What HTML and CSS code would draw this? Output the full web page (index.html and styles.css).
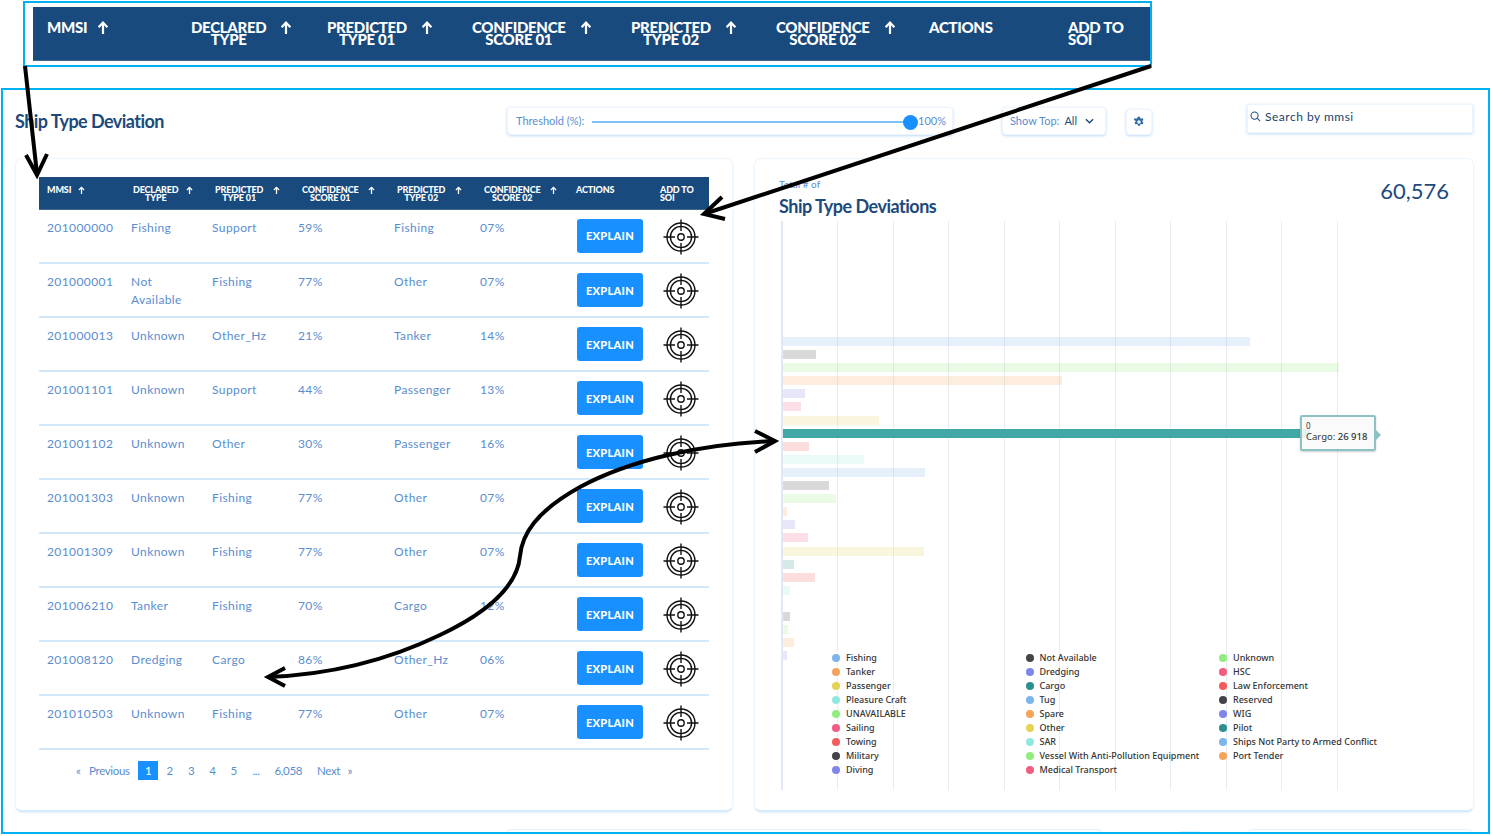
FILE: index.html
```html
<!DOCTYPE html>
<html lang="en">
<head>
    <meta charset="UTF-8">
    <meta name="viewport" content="width=device-width, initial-scale=1.0">
    <title>Ship Type Deviation</title>
    <link rel="stylesheet" href="styles.css">
</head>
<body>
    <svg width="0" height="0" class="defs">
        <symbol id="sort-up" viewBox="0 0 12 14">
            <path d="M6 13V2M1.6 6.2 6 1.6l4.4 4.6" fill="none" stroke="#fff" stroke-width="2.2"/>
        </symbol>
        <symbol id="target" viewBox="0 0 36 36">
            <g fill="none" stroke="#111" stroke-width="1.4">
                <circle cx="18" cy="18" r="14"/>
                <circle cx="18" cy="18" r="10.6"/>
                <circle cx="18" cy="18" r="3.2"/>
                <path d="M18 .5V12M18 24V35.5M.5 18H12M24 18H35.5"/>
            </g>
        </symbol>
    </svg>

    <div id="page">
        <section id="zoom-frame">
            <div class="zoom-head">
                <div class="zoom-cell"><span>MMSI</span><svg class="zoom-arrow"><use href="#sort-up"/></svg></div>
                <div class="zoom-cell"><span class="two-line">DECLARED<br>TYPE</span><svg class="zoom-arrow"><use href="#sort-up"/></svg></div>
                <div class="zoom-cell"><span class="two-line">PREDICTED<br>TYPE 01</span><svg class="zoom-arrow"><use href="#sort-up"/></svg></div>
                <div class="zoom-cell"><span class="two-line">CONFIDENCE<br>SCORE 01</span><svg class="zoom-arrow"><use href="#sort-up"/></svg></div>
                <div class="zoom-cell"><span class="two-line">PREDICTED<br>TYPE 02</span><svg class="zoom-arrow"><use href="#sort-up"/></svg></div>
                <div class="zoom-cell"><span class="two-line">CONFIDENCE<br>SCORE 02</span><svg class="zoom-arrow"><use href="#sort-up"/></svg></div>
                <div class="zoom-cell"><span>ACTIONS</span></div>
                <div class="zoom-cell"><span>ADD TO<br>SOI</span></div>
            </div>
        </section>

        <section id="main-frame">
            <div class="toolbar">
                <h1 class="page-title">Ship Type Deviation</h1>
                <div class="control threshold">
                    <span class="control-label">Threshold (%):</span>
                    <div class="slider-track"></div>
                    <div class="slider-thumb"></div>
                    <span class="control-label slider-value">100%</span>
                </div>
                <div class="control show-top">
                    <span class="control-label">Show Top:</span>
                    <span class="show-value">All</span>
                    <svg class="chevron" viewBox="0 0 10 6"><path d="M1 1l4 4 4-4" fill="none" stroke="#1c4a7c" stroke-width="1.6"/></svg>
                </div>
                <div class="control gear-box">
                    <svg class="gear" viewBox="0 0 16 16"><path fill="#2e6da4" fill-rule="evenodd" d="M6.6 1h2.8l.3 1.9 1.1.6 1.8-.7 1.4 2.4-1.5 1.2v1.2l1.5 1.2-1.4 2.4-1.8-.7-1.1.6-.3 1.9H6.6l-.3-1.9-1.1-.6-1.8.7-1.4-2.4 1.5-1.2V6.4L1 5.2l1.4-2.4 1.8.7 1.1-.6zM8 5.7a2.3 2.3 0 1 0 0 4.6 2.3 2.3 0 0 0 0-4.6z"/></svg>
                </div>
                <div class="search-box">
                    <svg class="search-icon" viewBox="0 0 12 12"><circle cx="5" cy="5" r="3.9" fill="none" stroke="#1c4a7c" stroke-width="1.1"/><path d="M8 8l3 3" stroke="#1c4a7c" stroke-width="1.1"/></svg>
                    <span>Search by mmsi</span>
                </div>
            </div>

            <div class="cards">
                <div class="card table-card">
                    <table class="dev-table">
                        <thead>
                            <tr>
                                <th class="col-mmsi"><div class="th-in">MMSI<svg class="th-arrow"><use href="#sort-up"/></svg></div></th>
                                <th class="col-declared"><div class="th-in"><span class="two-line">DECLARED<br>TYPE</span><svg class="th-arrow"><use href="#sort-up"/></svg></div></th>
                                <th class="col-pred"><div class="th-in"><span class="two-line">PREDICTED<br>TYPE 01</span><svg class="th-arrow"><use href="#sort-up"/></svg></div></th>
                                <th class="col-conf"><div class="th-in"><span class="two-line">CONFIDENCE<br>SCORE 01</span><svg class="th-arrow"><use href="#sort-up"/></svg></div></th>
                                <th class="col-pred"><div class="th-in"><span class="two-line">PREDICTED<br>TYPE 02</span><svg class="th-arrow"><use href="#sort-up"/></svg></div></th>
                                <th class="col-conf"><div class="th-in"><span class="two-line">CONFIDENCE<br>SCORE 02</span><svg class="th-arrow"><use href="#sort-up"/></svg></div></th>
                                <th class="col-actions">ACTIONS</th>
                                <th class="col-add">ADD TO<br>SOI</th>
                            </tr>
                        </thead>
                        <tbody id="dev-rows"></tbody>
                    </table>
                    <div class="pagination">
                        <a class="page-link page-prev">«</a>
                        <a class="page-link">Previous</a>
                        <a class="page-link page-current">1</a>
                        <a class="page-link">2</a>
                        <a class="page-link">3</a>
                        <a class="page-link">4</a>
                        <a class="page-link">5</a>
                        <a class="page-link page-dots">...</a>
                        <a class="page-link">6,058</a>
                        <a class="page-link page-next">Next</a>
                        <a class="page-link">»</a>
                    </div>
                </div>

                <div class="card chart-card">
                    <div class="chart-head">
                        <div>
                            <div class="chart-over">Total # of</div>
                            <h2 class="chart-title">Ship Type Deviations</h2>
                        </div>
                        <div class="chart-total">60,576</div>
                    </div>
                    <div class="plot">
                        <div class="bars" id="bars"></div>
                        <div class="legend" id="legend"></div>
                        <div class="chart-tooltip">
                            <div class="tip-small">0</div>
                            <div>Cargo: <b>26 918</b></div>
                        </div>
                    </div>
                </div>
            </div>

            <div class="next-cards">
                <div class="next-card next-a"></div>
                <div class="next-card next-b"></div>
                <div class="next-card next-c"></div>
            </div>
        </section>

        <svg id="arrows" viewBox="0 0 1491 836">
            <g fill="none" stroke="#000" stroke-width="4">
                <path d="M25 66 37 174"/>
                <path d="M26 155 37 175 47 154"/>
                <path d="M1151 66 704 214"/>
                <path d="M722 197 704 214 725 219"/>
                <path d="M775 441C700 444 630 460 580 487 535 512 522 535 520 556 517 590 480 616 440 635 380 664 320 675 268 677"/>
                <path d="M755 431 775 441 755 452M285 668 268 677 285 686"/>
            </g>
        </svg>
    </div>

    <script>
        const rows = [
            ['201000000', 'Fishing', 'Support', '59%', 'Fishing', '07%'],
            ['201000001', 'Not Available', 'Fishing', '77%', 'Other', '07%'],
            ['201000013', 'Unknown', 'Other_Hz', '21%', 'Tanker', '14%'],
            ['201001101', 'Unknown', 'Support', '44%', 'Passenger', '13%'],
            ['201001102', 'Unknown', 'Other', '30%', 'Passenger', '16%'],
            ['201001303', 'Unknown', 'Fishing', '77%', 'Other', '07%'],
            ['201001309', 'Unknown', 'Fishing', '77%', 'Other', '07%'],
            ['201006210', 'Tanker', 'Fishing', '70%', 'Cargo', '12%'],
            ['201008120', 'Dredging', 'Cargo', '86%', 'Other_Hz', '06%'],
            ['201010503', 'Unknown', 'Fishing', '77%', 'Other', '07%']
        ];

        const palette = ['#7cb5ec', '#434348', '#90ed7d', '#f7a35c', '#8085e9', '#f15c80', '#e4d354', '#2b908f', '#f45b5b', '#91e8e1'];

        // bar widths in px, same order as the legend series
        const barWidths = [467, 33, 556, 279, 22, 18, 96, 527, 26, 81, 142, 46, 53, 4, 12, 25, 141, 11, 32, 7, 0, 7, 5, 11, 4];

        const legendNames = [
            'Fishing', 'Not Available', 'Unknown',
            'Tanker', 'Dredging', 'HSC',
            'Passenger', 'Cargo', 'Law Enforcement',
            'Pleasure Craft', 'Tug', 'Reserved',
            'UNAVAILABLE', 'Spare', 'WIG',
            'Sailing', 'Other', 'Pilot',
            'Towing', 'SAR', 'Ships Not Party to Armed Conflict',
            'Military', 'Vessel With Anti-Pollution Equipment', 'Port Tender',
            'Diving', 'Medical Transport'
        ];

        const tbody = document.getElementById('dev-rows');
        rows.forEach(item => {
            const row = tbody.insertRow();
            item.forEach(text => {
                const cell = row.insertCell();
                cell.appendChild(document.createTextNode(text));
            });
            row.insertCell().innerHTML = '<button class="explain-button">EXPLAIN</button>';
            row.insertCell().innerHTML = '<svg class="target-icon"><use href="#target"/></svg>';
        });

        const bars = document.getElementById('bars');
        barWidths.forEach((width, i) => {
            const bar = document.createElement('div');
            bar.className = i === 7 ? 'bar bar-active' : 'bar';
            bar.style.width = width + 'px';
            bar.style.backgroundColor = i === 7 ? '#42a8a6' : palette[i % palette.length];
            bars.appendChild(bar);
        });

        const legend = document.getElementById('legend');
        legendNames.forEach((name, i) => {
            const item = document.createElement('div');
            item.className = 'legend-item';
            const dot = document.createElement('span');
            dot.className = 'legend-dot';
            dot.style.backgroundColor = palette[i % palette.length];
            item.appendChild(dot);
            item.appendChild(document.createTextNode(name));
            legend.appendChild(item);
        });
    </script>
</body>
</html>
```

FILE: styles.css
```css
* {
    box-sizing: border-box;
}

body {
    font-family: Lato, Arial, sans-serif;
    margin: 0;
    padding: 0;
    background-color: #fff;
    color: #5a8dcf;
}

.defs {
    display: block;
}

#page {
    position: relative;
    width: 1491px;
    height: 836px;
    overflow: hidden;
    padding-top: 1px;
}

#arrows {
    position: absolute;
    top: 0;
    left: 0;
    width: 1491px;
    height: 836px;
    pointer-events: none;
}

/* zoomed table header on top */
#zoom-frame {
    width: 1129px;
    height: 66px;
    margin-left: 23px;
    padding: 4px 0 4px 8px;
    border: 2px solid #00b0f0;
}

.zoom-head {
    display: grid;
    grid-template-columns: 144px 136px 145px 159px 145px 153px 139px 1fr;
    height: 54px;
    padding: 14px 0 0 14px;
    background-color: #184a7e;
    border-bottom: 1px solid #44688f;
    color: #fff;
    font-size: 15px;
    font-weight: 900;
    line-height: 12px;
    letter-spacing: -0.3px;
}

.zoom-cell {
    display: flex;
    align-items: flex-start;
    gap: 14px;
}

.zoom-cell:first-child {
    gap: 10px;
}

.zoom-arrow {
    width: 12px;
    height: 16px;
    margin-top: -1px;
}

.two-line {
    text-align: center;
}

/* main frame */
#main-frame {
    width: 1489px;
    height: 746px;
    margin: 21px 0 0 1px;
    padding: 14px 14px 0 12px;
    border: 2px solid #00b0f0;
    overflow: hidden;
}

.toolbar {
    display: flex;
    align-items: flex-start;
    height: 54px;
}

.page-title {
    width: 492px;
    margin: 6px 0 0 0;
    color: #1c4a7c;
    font-size: 18px;
    font-weight: 700;
    line-height: 22px;
    letter-spacing: -0.55px;
}

.control {
    display: flex;
    align-items: center;
    height: 28px;
    padding-bottom: 1px;
    background-color: #fff;
    border: 1px solid #edf5fd;
    border-radius: 4px;
    box-shadow: 0 1px 3px rgba(110, 170, 230, 0.45);
    font-size: 11px;
}

.control-label {
    color: #5a8dcf;
}

.threshold {
    width: 446px;
    margin-top: 3px;
    padding-left: 8px;
    padding-right: 6px;
}

.slider-track {
    flex: 1;
    height: 2px;
    margin: 3px 0 0 8px;
    background-color: #7cc3f7;
}

.slider-thumb {
    flex: none;
    width: 15px;
    height: 15px;
    margin: 3px 0 0 -1px;
    border-radius: 50%;
    background-color: #1890ff;
}

.show-top {
    width: 104px;
    margin: 3px 0 0 49px;
    padding-left: 7px;
    padding-right: 11px;
}

.show-value {
    margin-left: 5px;
    color: #1c4a7c;
}

.chevron {
    width: 9px;
    height: 6px;
    margin-left: auto;
}

.gear-box {
    justify-content: center;
    width: 26px;
    height: 26px;
    margin: 5px 0 0 20px;
}

.gear {
    width: 12px;
    height: 12px;
}

.search-box {
    display: flex;
    align-items: center;
    gap: 4px;
    width: 226px;
    height: 29px;
    margin-left: 95px;
    padding: 0 0 4px 2px;
    border: 1px solid #edf5fd;
    box-shadow: 0 1px 3px rgba(110, 170, 230, 0.45);
    color: #1c3f66;
    font-size: 12px;
    letter-spacing: 0.5px;
}

.search-icon {
    width: 11px;
    height: 11px;
}

/* cards */
.cards {
    display: flex;
    gap: 21px;
}

.card {
    width: 718px;
    height: 654px;
    background-color: #fff;
    border: 1px solid #eef6fd;
    border-bottom: 2px solid #d9ecfb;
    border-radius: 7px;
    box-shadow: 0 1px 2px rgba(120, 180, 240, 0.2);
}

.table-card {
    padding: 18px 23px 0 23px;
}

.dev-table {
    width: 670px;
    table-layout: fixed;
    border-collapse: collapse;
}

.dev-table th {
    height: 32px;
    padding: 9px 0 0 8px;
    background-color: #184a7e;
    border-bottom: 1px solid #44688f;
    color: #fff;
    font-size: 9px;
    font-weight: 900;
    line-height: 7.5px;
    letter-spacing: -0.15px;
    text-align: left;
    vertical-align: top;
}

.th-in {
    display: flex;
    gap: 7px;
}

.col-pred .th-in,
.col-conf .th-in {
    gap: 10px;
}

.th-arrow {
    width: 7px;
    height: 9px;
}

.col-mmsi {
    width: 84px;
}

.col-declared {
    width: 81px;
}

.col-pred {
    width: 86px;
}

.col-conf {
    width: 96px;
}

.dev-table .col-declared {
    padding-left: 10px;
}

.dev-table .col-pred {
    padding-left: 11px;
}

.dev-table .col-conf {
    padding-left: 12px;
}

.col-actions {
    width: 84px;
}

.dev-table td {
    height: 54px;
    padding: 9px 8px 0 8px;
    border-bottom: 2px solid #d2e8fb;
    font-size: 12px;
    line-height: 18px;
    letter-spacing: 0.4px;
    vertical-align: top;
}

.explain-button {
    display: block;
    width: 66px;
    height: 34px;
    margin: 0 0 0 1px;
    padding: 0;
    background-color: #1890ff;
    color: white;
    border: none;
    border-radius: 3px;
    font-family: Lato, Arial, sans-serif;
    font-size: 11px;
    font-weight: 900;
    letter-spacing: 0.3px;
    cursor: pointer;
}

.dev-table td:last-child {
    padding: 0;
}

.target-icon {
    display: block;
    width: 36px;
    height: 36px;
    margin: 9px 0 0 11px;
}

.pagination {
    display: flex;
    align-items: center;
    height: 20px;
    margin: 10px 0 0 35px;
    font-size: 11.5px;
    letter-spacing: -0.35px;
}

.page-link {
    padding: 0 7.5px;
    line-height: 19px;
    color: #5a8dcf;
}

.page-prev {
    padding: 0 1px 0 2px;
}

.page-current {
    width: 20px;
    margin: 0 1px 0 1px;
    padding: 0;
    background-color: #1890ff;
    color: #fff;
    text-align: center;
}

.page-dots {
    padding: 0 7.5px 0 8px;
}

.page-next {
    padding-right: 0;
}

/* chart */
.chart-card {
    width: 720px;
    padding: 19px 24px 0 24px;
}

.chart-head {
    display: flex;
    justify-content: space-between;
    height: 43px;
}

.chart-over {
    font-size: 10px;
    line-height: 13px;
}

.chart-title {
    margin: 4px 0 0;
    color: #1c4a7c;
    font-size: 18px;
    font-weight: 700;
    line-height: 22px;
    letter-spacing: -0.5px;
}

.chart-total {
    color: #1c4a7c;
    font-size: 22px;
    line-height: 26px;
}

.plot {
    position: relative;
    width: 611px;
    height: 569px;
    margin-left: 2px;
    padding-top: 116px;
    border-left: 2px solid #e1e7f7;
    background: repeating-linear-gradient(to right, transparent 0, transparent 54.5px, #e9edf2 54.5px, #e9edf2 55.5px);
    color: #333;
}

.bars {
    display: flex;
    flex-direction: column;
    gap: 4.1px;
    height: 314px;
}

.bar {
    flex: none;
    height: 9px;
    opacity: 0.2;
}

.bar-active {
    opacity: 1;
}

.legend {
    display: grid;
    grid-template-columns: 193.5px 193.5px 1fr;
    grid-auto-rows: 14px;
    padding-left: 49px;
    font-family: "Noto Sans", Arial, sans-serif;
    font-size: 9px;
    font-weight: 500;
    line-height: 14px;
    white-space: nowrap;
}

.legend-item {
    display: flex;
    align-items: center;
}

.legend-dot {
    flex: none;
    width: 8px;
    height: 8px;
    margin-right: 6px;
    border-radius: 50%;
}

.chart-tooltip {
    position: absolute;
    top: 194px;
    left: 517px;
    width: 76px;
    height: 36px;
    padding: 4px 4px;
    background-color: rgba(249, 249, 249, 0.9);
    border: 2px solid #8cc3c2;
    border-radius: 2px;
    box-shadow: 0 1px 2px rgba(0, 0, 0, 0.2);
    font-family: "Noto Sans", Arial, sans-serif;
    font-size: 9.5px;
    line-height: 14px;
    white-space: nowrap;
}

.chart-tooltip b {
    font-weight: 500;
}

.chart-tooltip::after {
    content: "";
    position: absolute;
    top: 13px;
    right: -7px;
    border-top: 5px solid transparent;
    border-bottom: 5px solid transparent;
    border-left: 5px solid #8cc3c2;
}

.tip-small {
    font-size: 8px;
    line-height: 9px;
}

/* top edge of the controls of the next row */
.next-cards {
    display: flex;
    align-items: flex-start;
    margin-top: 17px;
}

.next-card {
    height: 20px;
    border: 1px solid #e4f0fb;
    border-radius: 4px;
}

.next-a {
    width: 595px;
    margin-left: 492px;
}

.next-b {
    width: 25px;
    margin: 2px 0 0 75px;
}

.next-c {
    width: 225px;
    margin-left: 46px;
}
```
